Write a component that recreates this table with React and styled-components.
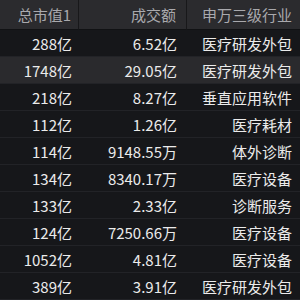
import React from 'react';
import styled, { createGlobalStyle } from 'styled-components';

const rows = [
  { cap: '288亿', vol: '6.52亿', ind: '医疗研发外包' },
  { cap: '1748亿', vol: '29.05亿', ind: '医疗研发外包', active: true },
  { cap: '218亿', vol: '8.27亿', ind: '垂直应用软件' },
  { cap: '112亿', vol: '1.26亿', ind: '医疗耗材' },
  { cap: '114亿', vol: '9148.55万', ind: '体外诊断' },
  { cap: '134亿', vol: '8340.17万', ind: '医疗设备' },
  { cap: '133亿', vol: '2.33亿', ind: '诊断服务' },
  { cap: '124亿', vol: '7250.66万', ind: '医疗设备' },
  { cap: '1052亿', vol: '4.81亿', ind: '医疗设备' },
  { cap: '389亿', vol: '3.91亿', ind: '医疗研发外包' },
];

const GlobalStyle = createGlobalStyle`
  html, body {
    margin: 0;
    padding: 0;
    background: #16171a;
  }
  body {
    font-family: "Noto Sans CJK SC", "Noto Sans", sans-serif;
  }
`;

const Table = styled.div`
  width: 300px;
  height: 300px;
  overflow: hidden;
  background: #16171a;
  display: grid;
  grid-template-columns: 79px 108px 113px;
  grid-auto-rows: 27px;
  grid-template-rows: 30px;
`;

const HeadCell = styled.div`
  display: flex;
  align-items: center;
  justify-content: flex-end;
  padding-right: ${(p) => p.pad}px;
  background: #2b2b2e;
  color: #a9a9ad;
  font-size: 15px;
  border-right: ${(p) => (p.last ? 'none' : '1px solid #18181a')};
  border-bottom: 1px solid #111214;
`;

const Cell = styled.div`
  display: flex;
  align-items: center;
  justify-content: flex-end;
  padding-right: ${(p) => p.pad}px;
  background: ${(p) => (p.active ? '#2a2a2d' : '#16171a')};
  color: #ebebeb;
  font-size: 15px;
  border-bottom: 1px solid #222327;
  white-space: nowrap;
`;

const pads = [7, 10, 8];

export default function App() {
  return (
    <>
      <GlobalStyle />
      <Table>
        <HeadCell pad={pads[0]}>总市值1</HeadCell>
        <HeadCell pad={pads[1]}>成交额</HeadCell>
        <HeadCell pad={pads[2]} last>申万三级行业</HeadCell>
        {rows.map((r, i) => (
          <React.Fragment key={i}>
            <Cell pad={pads[0]} active={r.active}>{r.cap}</Cell>
            <Cell pad={pads[1]} active={r.active}>{r.vol}</Cell>
            <Cell pad={pads[2]} active={r.active}>{r.ind}</Cell>
          </React.Fragment>
        ))}
      </Table>
    </>
  );
}
